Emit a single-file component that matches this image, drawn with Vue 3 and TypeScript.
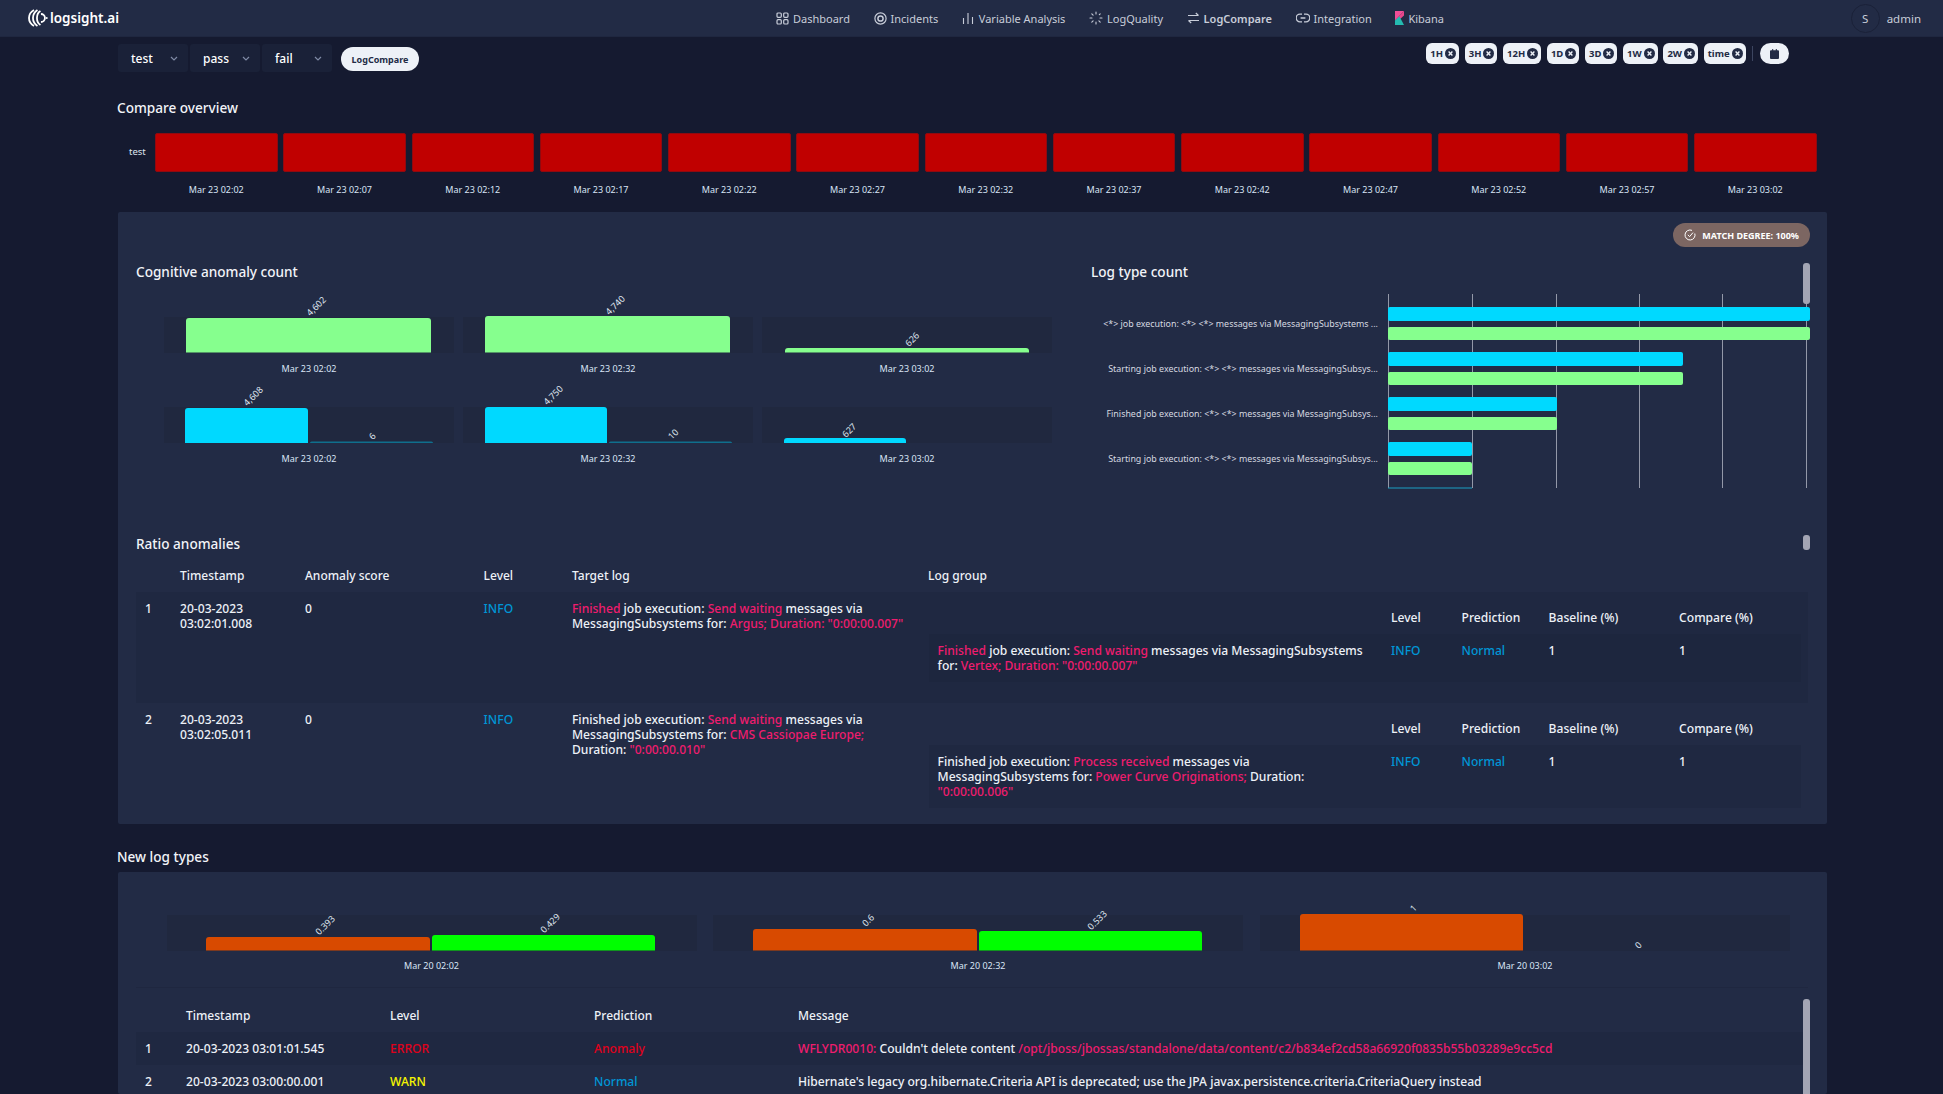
<script setup lang="ts">
interface Bar {
  x: number;
  y: number;
  w: number;
  color: string;
}

interface Value {
  x: number;
  y: number;
  text: string;
}

const navItems = [
  { name: "Dashboard", icon: "dashboard" },
  { name: "Incidents", icon: "incidents" },
  { name: "Variable Analysis", icon: "variable" },
  { name: "LogQuality", icon: "quality" },
  { name: "LogCompare", icon: "compare" },
  { name: "Integration", icon: "integration" },
  { name: "Kibana", icon: "kibana" },
];

const ranges = ["1H", "3H", "12H", "1D", "3D", "1W", "2W", "time"];

const overview = [
  "02:02", "02:07", "02:12", "02:17", "02:22", "02:27", "02:32",
  "02:37", "02:42", "02:47", "02:52", "02:57", "03:02",
].map((t) => `Mar 23 ${t}`);

const green = "#86ff8e";
const blue = "#00d9ff";
const orange = "#d84a00";
const lime = "#00ff00";

const cogBands = [
  { x: 164, y: 317 }, { x: 463, y: 317 }, { x: 762, y: 317 },
  { x: 164, y: 407 }, { x: 463, y: 407 }, { x: 762, y: 407 },
];
const cogBars: Bar[] = [
  { x: 186, y: 318, w: 245, color: green },
  { x: 485, y: 316, w: 245, color: green },
  { x: 785, y: 348, w: 244, color: green },
  { x: 185, y: 408, w: 123, color: blue },
  { x: 310, y: 441.5, w: 123, color: "#0f6f8d" },
  { x: 485, y: 407, w: 122, color: blue },
  { x: 609, y: 441.5, w: 123, color: "#0f6f8d" },
  { x: 784, y: 438, w: 122, color: blue },
];
const cogValues: Value[] = [
  { x: 316, y: 306, text: "4,602" },
  { x: 615, y: 305, text: "4,740" },
  { x: 912, y: 339, text: "626" },
  { x: 253, y: 396, text: "4,608" },
  { x: 553, y: 395, text: "4,750" },
  { x: 372, y: 436, text: "6" },
  { x: 673, y: 434, text: "10" },
  { x: 849, y: 430, text: "627" },
];
const cogLabels = [
  { x: 309, y: 368 }, { x: 608, y: 368 }, { x: 907, y: 368 },
  { x: 309, y: 458 }, { x: 608, y: 458 }, { x: 907, y: 458 },
].map((p, i) => ({ ...p, text: ["Mar 23 02:02", "Mar 23 02:32", "Mar 23 03:02"][i % 3] }));

const typeGrid = [1388.5, 1472.5, 1556.5, 1639.5, 1722.5, 1806.5];
const typeRows = [
  { label: "<*> job execution: <*> <*> messages via MessagingSubsystems ...", y: 307, end: 1810 },
  { label: "Starting job execution: <*> <*> messages via MessagingSubsys...", y: 352, end: 1683 },
  { label: "Finished job execution: <*> <*> messages via MessagingSubsys...", y: 397, end: 1557 },
  { label: "Starting job execution: <*> <*> messages via MessagingSubsys...", y: 442, end: 1472 },
];

const newBands = [167, 713, 1260];
const newBars: Bar[] = [
  { x: 206, y: 937, w: 224, color: orange },
  { x: 432, y: 935, w: 223, color: lime },
  { x: 753, y: 929, w: 224, color: orange },
  { x: 979, y: 931, w: 223, color: lime },
  { x: 1300, y: 914, w: 223, color: orange },
];
const newValues: Value[] = [
  { x: 325, y: 925, text: "0.393" },
  { x: 550, y: 923, text: "0.429" },
  { x: 868, y: 920, text: "0.6" },
  { x: 1097, y: 920, text: "0.533" },
  { x: 1413, y: 908, text: "1" },
  { x: 1638, y: 945, text: "0" },
];
const newLabels = [
  { x: 431.5, text: "Mar 20 02:02" },
  { x: 978, text: "Mar 20 02:32" },
  { x: 1525, text: "Mar 20 03:02" },
];

// bar with rounded top corners, standing on the baseline
const topRound = (bar: Bar, base: number) => {
  const r = Math.min(3, base - bar.y);
  const right = bar.x + bar.w;
  return `M${bar.x} ${base}V${bar.y + r}Q${bar.x} ${bar.y} ${bar.x + r} ${bar.y}H${right - r}Q${right} ${bar.y} ${right} ${bar.y + r}V${base}Z`;
};
</script>

<template>
  <div class="page">
    <header class="topbar">
      <div class="logo">
        <svg width="20" height="18" viewBox="0 0 20 18" fill="none" stroke="#fff" stroke-width="1.8">
          <path d="M6 1C2.500 3 1 5.500 1 9s1.500 6 5 8" />
          <path d="M9.500 1C6.500 3 5 5.500 5 9s1.500 6 4.500 8" />
          <path d="M12.500 2C10 3.500 9 6 9 9s1 5.500 3.500 7" />
          <path d="M13 5a4 4 0 0 1 0 8" />
          <circle cx="18.800" cy="9" r="1" fill="#fff" stroke="none" />
        </svg>
        <span>logsight.ai</span>
      </div>
      <nav class="nav">
        <a v-for="item in navItems" :key="item.name" class="nav-item" :class="{ active: item.name === 'LogCompare' }">
          <svg v-if="item.icon === 'dashboard'" width="13" height="13" viewBox="0 0 13 13" fill="none" stroke="currentColor" stroke-width="1.2">
            <rect x="1" y="1" width="4.300" height="4.300" rx="1" />
            <rect x="7.700" y="1" width="4.300" height="4.300" rx="1" />
            <rect x="1" y="7.700" width="4.300" height="4.300" rx="1" />
            <rect x="7.700" y="7.700" width="4.300" height="4.300" rx="1" />
          </svg>
          <svg v-else-if="item.icon === 'incidents'" width="13" height="15" viewBox="0 0 13 15" fill="none" stroke="currentColor" stroke-width="1.2">
            <circle cx="6.500" cy="7.500" r="5.600" />
            <circle cx="6.500" cy="7.500" r="2.600" stroke-width="1.500" />
          </svg>
          <svg v-else-if="item.icon === 'variable'" width="13" height="13" viewBox="0 0 13 13" fill="none" stroke="currentColor" stroke-width="1.100">
            <path d="M1.500 6v6M6 1v11M10.500 5v7" />
          </svg>
          <svg v-else-if="item.icon === 'quality'" width="14" height="14" viewBox="0 0 14 14" fill="none" stroke="currentColor" stroke-width="1.100" stroke-linecap="round">
            <path d="M7 1v2M7 11v2M1 7h2M11 7h2M2.800 2.800l1.300 1.300M9.900 9.900l1.300 1.300M2.800 11.200l1.300-1.300M11.200 2.800l-.9.9" />
          </svg>
          <svg v-else-if="item.icon === 'compare'" width="13" height="12" viewBox="0 0 13 12" fill="none" stroke="currentColor" stroke-width="1.200">
            <path d="M1 3.500h10.500M8.800 1l2.700 2.500M12 8.500H1.500M4.200 11L1.500 8.500" />
          </svg>
          <svg v-else-if="item.icon === 'integration'" width="14" height="10" viewBox="0 0 14 10" fill="none" stroke="currentColor" stroke-width="1.300">
            <path d="M6 1.200H4a3.800 3.800 0 0 0 0 7.600h2M8 1.200h2a3.800 3.800 0 0 1 0 7.600H8M4.600 5h4.800" />
          </svg>
          <svg v-else width="9" height="14" viewBox="0 0 9 14">
            <path d="M0 0h9L0 9.500z" fill="#f04e98" />
            <path d="M0 9.500L9 0v4.500L4 9z" fill="#e8478b" />
            <path d="M0 14V9.500l4.400-4.200L9 14z" fill="#24bbb1" />
          </svg>
          <span>{{ item.name }}</span>
        </a>
      </nav>
      <div class="user">
        <span class="avatar">S</span>
        <span>admin</span>
      </div>
    </header>

    <div class="toolbar">
      <div class="select"><span>test</span><svg width="8" height="5" viewBox="0 0 8 5"><path d="M1 1l3 3 3-3" /></svg></div>
      <div class="select"><span>pass</span><svg width="8" height="5" viewBox="0 0 8 5"><path d="M1 1l3 3 3-3" /></svg></div>
      <div class="select"><span>fail</span><svg width="8" height="5" viewBox="0 0 8 5"><path d="M1 1l3 3 3-3" /></svg></div>
      <button type="button" class="compare-btn">LogCompare</button>
      <div class="ranges">
        <span v-for="r in ranges" :key="r" class="chip">
          {{ r }}
          <svg width="11" height="11" viewBox="0 0 11 11">
            <circle cx="5.500" cy="5.500" r="5.500" fill="#222b45" />
            <path d="M3.600 3.600l3.800 3.800M7.400 3.600l-3.800 3.800" stroke="#edf1f7" stroke-width="1.400" />
          </svg>
        </span>
        <span class="sep"></span>
        <span class="calendar">
          <svg width="9" height="10" viewBox="0 0 9 10" fill="#222b45">
            <path d="M1 1.200h1.200V0h1v1.200h2.600V0h1v1.200H8a1 1 0 0 1 1 1V9a1 1 0 0 1-1 1H1a1 1 0 0 1-1-1V2.200a1 1 0 0 1 1-1z" />
          </svg>
        </span>
      </div>
    </div>

    <main class="content">
      <h2 class="title overview-title">Compare overview</h2>
      <div class="heat">
        <span class="heat-name">test</span>
        <div class="heat-grid">
          <div v-for="t in overview" :key="t" class="heat-cell"></div>
        </div>
      </div>
      <div class="heat-labels">
        <span v-for="t in overview" :key="t">{{ t }}</span>
      </div>

      <section class="panel compare-panel">
        <span class="scroll scroll-a"></span>
        <span class="scroll scroll-b"></span>
        <div class="pill-row">
          <span class="pill">
            <svg width="12" height="12" viewBox="0 0 12 12" fill="none" stroke="#fff" stroke-width="1">
              <path d="M10.800 4.500A5 5 0 1 1 8 1.400" />
              <path d="M3.800 5.800l1.800 1.800 3.400-4" />
            </svg>
            MATCH DEGREE: 100%
          </span>
        </div>

        <div class="chart-row">
          <div>
            <h3 class="title">Cognitive anomaly count</h3>
            <svg class="cog-chart" width="900" height="170" viewBox="164 296 900 170">
              <rect v-for="(b, i) in cogBands" :key="i" :x="b.x" :y="b.y" width="290" height="36" class="band" />
              <path v-for="(b, i) in cogBars" :key="i" :d="topRound(b, i < 3 ? 352.500 : 443)" :fill="b.color" />
              <text
                v-for="v in cogValues"
                :key="v.text"
                :x="v.x"
                :y="v.y"
                class="value"
                :transform="`rotate(-45 ${v.x} ${v.y})`"
              >{{ v.text }}</text>
              <text v-for="(l, i) in cogLabels" :key="i" :x="l.x" :y="l.y" class="axis">{{ l.text }}</text>
            </svg>
          </div>
          <div>
            <h3 class="title">Log type count</h3>
            <svg class="type-chart" width="722" height="196" viewBox="1091 294 722 196">
              <line v-for="x in typeGrid" :key="x" :x1="x" :x2="x" y1="294" y2="488" class="grid-line" />
              <g v-for="(row, i) in typeRows" :key="i">
                <text x="1378" :y="row.y + 16.500" class="type-label">{{ row.label }}</text>
                <rect x="1388" :y="row.y" :width="row.end - 1388" height="14" rx="2" :fill="blue" />
                <rect x="1388" :y="row.y + 20" :width="row.end - 1388" height="13" rx="2" :fill="green" />
              </g>
              <rect x="1388" y="487.500" width="84" height="1" fill="#1a9fc4" />
            </svg>
          </div>
        </div>

        <h3 class="title ratio-title">Ratio anomalies</h3>
        <table class="ratio">
          <thead>
            <tr>
              <th class="c-num"></th>
              <th class="c-time">Timestamp</th>
              <th class="c-score">Anomaly score</th>
              <th class="c-level">Level</th>
              <th class="c-target">Target log</th>
              <th>Log group</th>
            </tr>
          </thead>
          <tbody>
            <tr class="striped">
              <td class="num">1</td>
              <td>20-03-2023<br />03:02:01.008</td>
              <td>0</td>
              <td class="info">INFO</td>
              <td>
                <em>Finished</em> job execution: <em>Send waiting</em> messages via<br />
                MessagingSubsystems for: <em>Argus; Duration: "0:00:00.007"</em>
              </td>
              <td class="group-cell">
                <table class="inner">
                  <thead>
                    <tr>
                      <th class="i-msg"></th>
                      <th class="i-level">Level</th>
                      <th class="i-pred">Prediction</th>
                      <th class="i-base">Baseline (%)</th>
                      <th>Compare (%)</th>
                    </tr>
                  </thead>
                  <tbody>
                    <tr>
                      <td class="i-msg">
                        <em>Finished</em> job execution: <em>Send waiting</em> messages via MessagingSubsystems<br />
                        for: <em>Vertex; Duration: "0:00:00.007"</em>
                      </td>
                      <td class="info">INFO</td>
                      <td class="info">Normal</td>
                      <td>1</td>
                      <td>1</td>
                    </tr>
                  </tbody>
                </table>
              </td>
            </tr>
            <tr>
              <td class="num">2</td>
              <td>20-03-2023<br />03:02:05.011</td>
              <td>0</td>
              <td class="info">INFO</td>
              <td>
                Finished job execution: <em>Send waiting</em> messages via<br />
                MessagingSubsystems for: <em>CMS Cassiopae Europe;</em><br />
                Duration: <em>"0:00:00.010"</em>
              </td>
              <td class="group-cell">
                <table class="inner">
                  <thead>
                    <tr>
                      <th class="i-msg"></th>
                      <th class="i-level">Level</th>
                      <th class="i-pred">Prediction</th>
                      <th class="i-base">Baseline (%)</th>
                      <th>Compare (%)</th>
                    </tr>
                  </thead>
                  <tbody>
                    <tr>
                      <td class="i-msg">
                        Finished job execution: <em>Process received</em> messages via<br />
                        MessagingSubsystems for: <em>Power Curve Originations;</em> Duration:<br />
                        <em>"0:00:00.006"</em>
                      </td>
                      <td class="info">INFO</td>
                      <td class="info">Normal</td>
                      <td>1</td>
                      <td>1</td>
                    </tr>
                  </tbody>
                </table>
              </td>
            </tr>
          </tbody>
        </table>
      </section>

      <h2 class="title new-title">New log types</h2>
      <section class="panel new-panel">
        <span class="scroll scroll-c"></span>
        <svg class="new-chart" width="1709" height="115" viewBox="118 872 1709 115">
          <rect v-for="x in newBands" :key="x" :x="x" y="915" width="530" height="36" class="band" />
          <path v-for="(b, i) in newBars" :key="i" :d="topRound(b, 950.500)" :fill="b.color" />
          <text
            v-for="v in newValues"
            :key="v.text"
            :x="v.x"
            :y="v.y"
            class="value"
            :transform="`rotate(-45 ${v.x} ${v.y})`"
          >{{ v.text }}</text>
          <text v-for="l in newLabels" :key="l.x" :x="l.x" y="965" class="axis">{{ l.text }}</text>
        </svg>
        <table class="logs">
          <thead>
            <tr>
              <th class="l-num"></th>
              <th class="l-col">Timestamp</th>
              <th class="l-col">Level</th>
              <th class="l-col">Prediction</th>
              <th>Message</th>
            </tr>
          </thead>
          <tbody>
            <tr class="striped">
              <td class="num">1</td>
              <td>20-03-2023 03:01:01.545</td>
              <td class="error">ERROR</td>
              <td class="error">Anomaly</td>
              <td>
                <em>WFLYDR0010:</em> Couldn't delete content
                <em>/opt/jboss/jbossas/standalone/data/content/c2/b834ef2cd58a66920f0835b55b03289e9cc5cd</em>
              </td>
            </tr>
            <tr>
              <td class="num">2</td>
              <td>20-03-2023 03:00:00.001</td>
              <td class="warn">WARN</td>
              <td class="info">Normal</td>
              <td>Hibernate's legacy org.hibernate.Criteria API is deprecated; use the JPA javax.persistence.criteria.CriteriaQuery instead</td>
            </tr>
          </tbody>
        </table>
      </section>
    </main>
  </div>
</template>

<style>
html,
body {
  margin: 0;
  height: 100%;
  overflow: hidden;
  background: #151a30;
}
</style>

<style scoped>
.page {
  height: 1094px;
  overflow: hidden;
  background: #151a30;
  color: #edf1f7;
  font-family: "Noto Sans", "Open Sans", sans-serif;
  font-size: 12px;
}

.topbar {
  display: flex;
  align-items: center;
  height: 36px;
  padding: 0 22px 0 28px;
  background: #222b45;
  border-bottom: 1px solid #1f2740;
}

.logo {
  display: flex;
  align-items: center;
  width: 91px;
  gap: 2px;
  color: #fff;
  font-size: 13.500px;
  font-weight: 600;
  white-space: nowrap;
}

.nav {
  display: flex;
  align-items: center;
  gap: 23.600px;
  margin-left: 657px;
  color: #c8cdd9;
  font-size: 11px;
}

.nav-item {
  display: flex;
  align-items: center;
  gap: 4px;
  white-space: nowrap;
}

.nav-item.active {
  font-weight: 600;
}

.user {
  display: flex;
  align-items: center;
  gap: 7px;
  margin-left: auto;
  color: #c8cdd9;
  font-size: 11.500px;
}

.avatar {
  display: flex;
  align-items: center;
  justify-content: center;
  width: 27px;
  height: 27px;
  border: 1px solid #1a2138;
  border-radius: 50%;
}

.toolbar {
  display: flex;
  height: 35px;
  padding: 7px 0 0 118px;
  box-sizing: border-box;
}

.select {
  display: flex;
  align-items: center;
  justify-content: space-between;
  box-sizing: border-box;
  width: 70px;
  height: 28px;
  margin-right: 2px;
  padding: 0 10px 0 13px;
  background: #1a2138;
  border-radius: 3px;
  color: #fff;
  font-weight: 500;
}

.select svg {
  fill: none;
  stroke: #7f8aa5;
  stroke-width: 1.2;
}

.compare-btn {
  width: 78px;
  height: 24px;
  margin: 3px 0 0 7px;
  padding: 0;
  background: #edf1f7;
  border: 0;
  border-radius: 12px;
  color: #222b45;
  font-family: inherit;
  font-size: 9px;
  font-weight: 700;
}

.ranges {
  display: flex;
  align-items: center;
  gap: 5.700px;
  height: 21px;
  margin: -1px 154px 0 auto;
}

.chip {
  display: flex;
  align-items: center;
  gap: 2px;
  height: 21px;
  padding: 0 3px 0 4px;
  background: #edf1f7;
  border-radius: 6px;
  color: #222b45;
  font-size: 9.500px;
  font-weight: 700;
}

.sep {
  width: 1px;
  height: 15px;
  margin-left: 1px;
  background: #3c4560;
}

.calendar {
  display: flex;
  align-items: center;
  justify-content: center;
  width: 29px;
  height: 21px;
  margin-left: 1px;
  background: #edf1f7;
  border-radius: 11px;
}

.content {
  padding: 0 116px 0 118px;
}

.title {
  margin: 0;
  color: #f2f4f8;
  font-size: 13.600px;
  font-weight: 500;
  line-height: 20px;
}

.overview-title {
  margin-top: 26px;
  margin-left: -1px;
}

.heat {
  display: flex;
  align-items: center;
  margin-top: 15px;
}

.heat-name {
  width: 27px;
  margin-top: -2px;
  padding-left: 11px;
  color: #dfe4ee;
  font-size: 9.500px;
}

.heat-grid {
  display: grid;
  grid-template-columns: repeat(13, 122.500px);
  gap: 5.750px;
  margin-left: -1px;
}

.heat-cell {
  height: 39px;
  box-sizing: border-box;
  background: #c00000;
  border: 1px solid #8f0a10;
  border-radius: 2px;
}

.heat-labels {
  display: grid;
  grid-template-columns: repeat(13, 122.500px);
  gap: 5.750px;
  margin: 11px 0 0 37px;
  color: #d9e5f5;
  font-size: 9px;
  line-height: 14px;
  text-align: center;
}

.panel {
  position: relative;
  overflow: hidden;
  background: #222b45;
  border-radius: 2px;
}

.compare-panel {
  height: 612px;
  margin-top: 15px;
  padding-top: 11px;
  box-sizing: border-box;
}

.scroll {
  position: absolute;
  left: 1685px;
  width: 7px;
  background: #a3a5b4;
  border-radius: 3px;
}

.scroll-a {
  top: 51px;
  height: 41px;
}

.scroll-b {
  top: 323px;
  height: 15px;
}

.scroll-c {
  top: 127px;
  height: 110px;
}

.pill-row {
  display: flex;
  justify-content: flex-end;
  padding-right: 17px;
}

.pill {
  display: flex;
  align-items: center;
  gap: 6px;
  height: 24px;
  padding: 0 11px;
  background: #7c6662;
  border-radius: 12px;
  color: #fff;
  font-size: 9px;
  font-weight: 700;
}

.chart-row {
  display: grid;
  grid-template-columns: 955px 1fr;
  margin-top: 15px;
  padding-left: 18px;
}

.cog-chart {
  display: block;
  margin: 14px 0 0 28px;
  overflow: visible;
}

.type-chart {
  display: block;
  margin-top: 12px;
  overflow: hidden;
}

.band {
  fill: #20283f;
}

.value {
  fill: #dfe4ee;
  font-size: 9px;
  text-anchor: middle;
  dominant-baseline: central;
}

.axis {
  fill: #d9e5f5;
  font-size: 9px;
  text-anchor: middle;
  dominant-baseline: central;
}

.grid-line {
  stroke: #9398a8;
  stroke-width: 1;
}

.type-label {
  fill: #d6d9e0;
  font-size: 8.900px;
  text-anchor: end;
  dominant-baseline: central;
}

.ratio-title {
  margin: 44px 0 0 18px;
}

table {
  border-collapse: collapse;
  table-layout: fixed;
}

th {
  padding: 0;
  color: #edf1f7;
  font-weight: 500;
  text-align: left;
}

td {
  padding: 0;
  color: #edf1f7;
  font-size: 12.100px;
  font-weight: 500;
  line-height: 15px;
  vertical-align: top;
  white-space: nowrap;
}

em {
  color: #f01c6e;
  font-style: normal;
}

.info {
  color: #0096d6;
}

.error {
  color: #e0001b;
}

.warn {
  color: #f5f500;
}

.ratio {
  width: 1672px;
  margin: 6px 0 0 18px;
}

.ratio > thead th {
  height: 32px;
  padding-bottom: 2px;
  box-sizing: border-box;
}

.c-num {
  width: 44px;
}

.c-time {
  width: 125px;
}

.c-score {
  width: 178.600px;
}

.c-level {
  width: 88.400px;
}

.c-target {
  width: 356px;
}

.ratio > tbody > tr > td {
  padding-top: 9px;
}

.num {
  padding-left: 9px;
  box-sizing: border-box;
}

.striped {
  background: rgba(26, 33, 56, 0.35);
}

.ratio > tbody > tr > td.group-cell {
  padding: 10px 7px 21px 1px;
}

.inner {
  width: 872px;
}

.inner th {
  height: 32px;
  padding-bottom: 2px;
  box-sizing: border-box;
}

.inner td {
  padding: 9px 0;
  background: rgba(26, 33, 56, 0.35);
}

.inner td.i-msg {
  padding-left: 8.600px;
}

.i-msg {
  width: 462px;
  box-sizing: border-box;
}

.i-level {
  width: 70.600px;
}

.i-pred {
  width: 87px;
}

.i-base {
  width: 130.500px;
}

.new-title {
  margin: 23px 0 5px -1px;
}

.new-panel {
  height: 222px;
}

.new-chart {
  display: block;
  overflow: hidden;
}

.logs {
  width: 1672px;
  margin: 0 0 0 18px;
  border-top: 1px solid #1f2740;
}

.logs th {
  height: 44px;
  padding-top: 11px;
  box-sizing: border-box;
}

.logs td {
  height: 33px;
  line-height: 33px;
}

.l-num {
  width: 50px;
}

.l-col {
  width: 204px;
}
</style>
